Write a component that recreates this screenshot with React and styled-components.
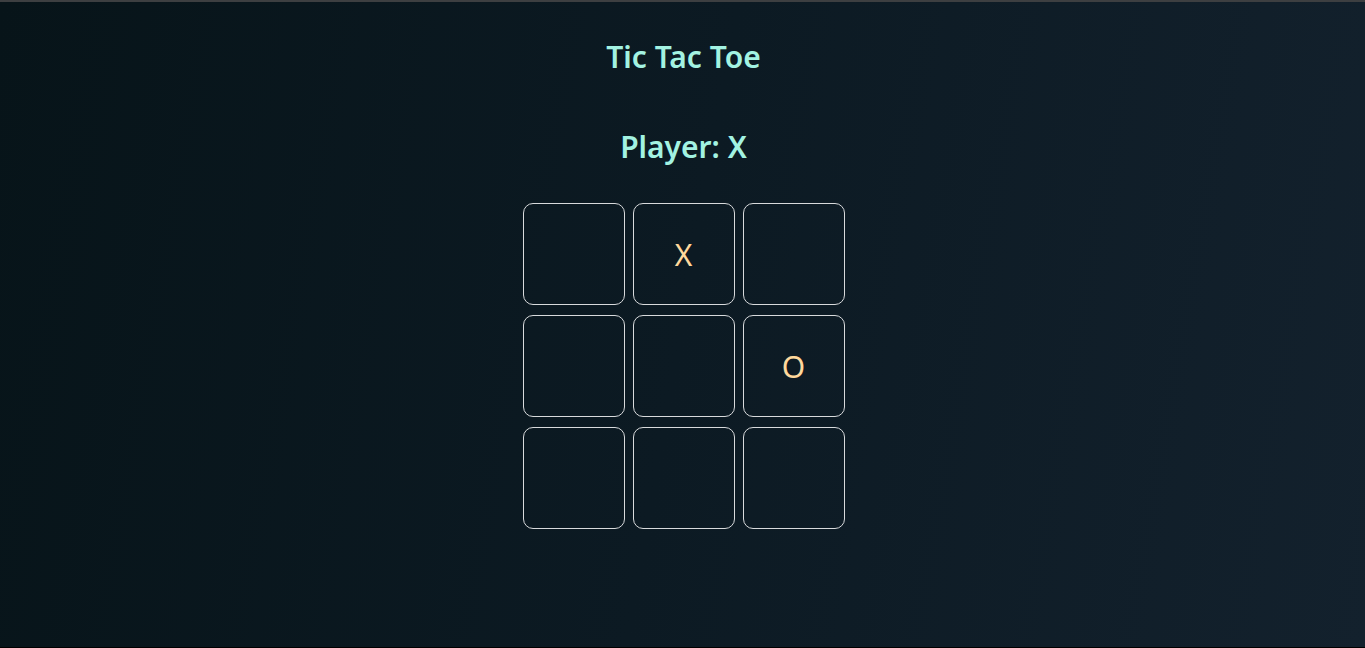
import React from "react";
import styled, { createGlobalStyle } from "styled-components";

const Global = createGlobalStyle`
  html, body { margin: 0; padding: 0; }
  body { font-family: "Noto Sans", "Open Sans", sans-serif; background: #0b1820; }
`;

const Page = styled.main`
  box-sizing: border-box;
  height: 648px;
  border-top: 2px solid #3d3f41;
  border-bottom: 1px solid #000;
  background: linear-gradient(100deg, #071419 0%, #0c1a23 50%, #13212d 100%);
  display: flex;
  flex-direction: column;
  align-items: center;
  padding: 35px 0 0 2px;
`;

const Title = styled.h1`
  margin: 0;
  font-size: 30px;
  line-height: 40px;
  font-weight: 600;
  color: #a3f3e2;
`;

const Status = styled.h2`
  margin: 50px 0 0;
  font-size: 30px;
  line-height: 40px;
  font-weight: 600;
  color: #a3f3e2;
`;

const Board = styled.div`
  margin-top: 36px;
  display: grid;
  grid-template-columns: repeat(3, 102px);
  grid-auto-rows: 102px;
  gap: 10px 8px;
`;

const Cell = styled.button`
  box-sizing: border-box;
  width: 102px;
  height: 102px;
  border: 1px solid #d8dadc;
  border-radius: 10px;
  background: transparent;
  color: #ffd89c;
  font-family: "Noto Sans", "Open Sans", sans-serif;
  font-size: 30px;
  font-weight: 400;
  display: flex;
  align-items: center;
  justify-content: center;
  padding: 1px 0 0;
  cursor: pointer;
`;

const cells = ["", "X", "", "", "", "O", "", "", ""];

export default function App() {
  return (
    <>
      <Global />
      <Page>
        <Title>Tic Tac Toe</Title>
        <Status>Player: X</Status>
        <Board>
          {cells.map((c, i) => (
            <Cell key={i}>{c}</Cell>
          ))}
        </Board>
      </Page>
    </>
  );
}
